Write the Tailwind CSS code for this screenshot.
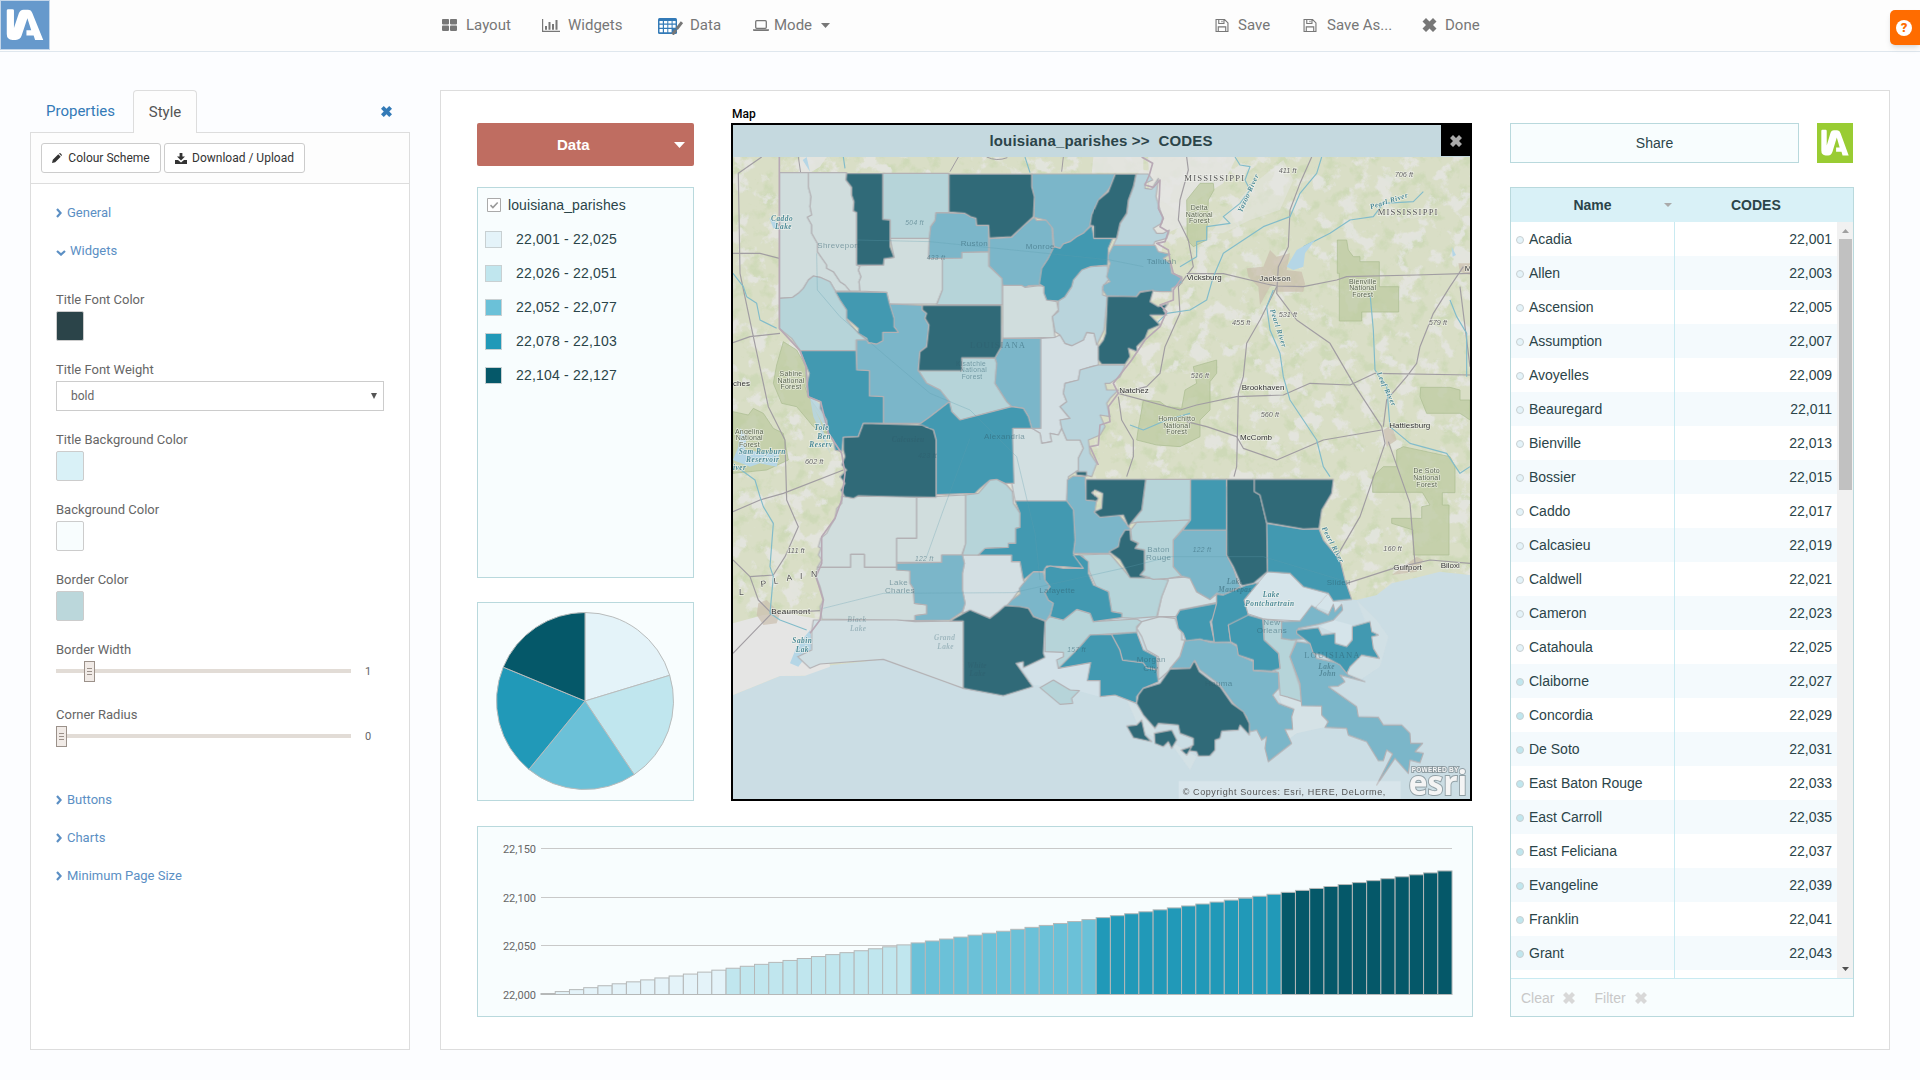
<!DOCTYPE html>
<html lang="en">
<head>
<meta charset="utf-8">
<title>Dashboard designer</title>
<script src="https://cdn.jsdelivr.net/npm/@tailwindcss/browser@4"></script>
</head>
<body class="flex h-[1080px] w-[1920px] flex-col overflow-hidden bg-[#fcfdff] font-[Roboto,sans-serif] text-[#666]">

<svg class="hidden">
  <symbol id="logo" viewBox="0 0 50 50">
    <path fill="#fff" d="M6 10q0-1.500 1.500-1.500H12q1.500 0 1.500 1.500V28L18.500 13q1.300-4 5-4H28q3.500 0 4.600 3.500L44 40.500h-8.500L34 36h-7.500v-5.500h5L27.500 18l-6 18q-1.500 4.500-6 4.500H12q-6 0-6-6z"/>
  </symbol>
  <symbol id="cross" viewBox="0 0 14 14">
    <path fill="currentColor" d="M3.500 0L7 3.500 10.500 0 14 3.500 10.500 7 14 10.500 10.500 14 7 10.500 3.500 14 0 10.500 3.500 7 0 3.500z"/>
  </symbol>
  <symbol id="floppy" viewBox="0 0 14 14">
    <path fill="none" stroke="currentColor" stroke-width="1.200" d="M.6.6h9.200l3.600 3.600v9.200H.6zM3.500.6v4.200h5.600V.6M3 13.400V8.500h8v4.900M7 1.800v1.800"/>
  </symbol>
  <symbol id="right" viewBox="0 0 6 10"><path fill="none" stroke="currentColor" stroke-width="2.200" d="M1 1l3.600 4L1 9"/></symbol>
  <symbol id="down" viewBox="0 0 10 6"><path fill="none" stroke="currentColor" stroke-width="2.200" d="M1 1l4 3.600L9 1"/></symbol>
</svg>

<header class="flex h-[52px] shrink-0 border-b border-[#dfe7ee] bg-[#fdfdfd] text-[15px] text-[#777]">
  <div class="h-[50px] w-[50px] border border-[#c3d6ea] bg-[#6699cc]"><svg class="h-12 w-12"><use href="#logo"/></svg></div>
  <nav class="ml-[392px] flex h-[50px] items-center">
    <a class="flex w-[100px] items-center gap-[9px]">
      <svg class="h-3 w-[15px]" viewBox="0 0 15 12" fill="currentColor"><rect width="7" height="5.400" rx=".8"/><rect x="8" width="7" height="5.400" rx=".8"/><rect y="6.500" width="7" height="5.400" rx=".8"/><rect x="8" y="6.500" width="7" height="5.400" rx=".8"/></svg>Layout</a>
    <a class="flex w-[116px] items-center gap-2">
      <svg class="h-[13px] w-[18px]" viewBox="0 0 18 13" fill="currentColor"><path d="M0 0h1.200v11.800H18V13H0zM3 7h2v3.800H3zM6.500 3h2v7.800h-2zM10 5h2v5.800h-2zM13.500 1h2v9.800h-2z"/></svg>Widgets</a>
    <a class="flex w-[95px] items-center gap-[7px]">
      <svg class="mt-[2px] h-[17px] w-[25px]" viewBox="0 0 25 17"><rect width="19" height="16" rx="1.500" fill="#337ab7"/><path fill="#fff" d="M1.500 3h3.300v2.500H1.500zM6 3h3.300v2.500H6zM10.300 3h3.300v2.500h-3.300zM14.600 3h3v2.500h-3zM1.500 6.700h3.300v3H1.500zM6 6.700h3.300v3H6zM10.300 6.700h3.300v3h-3.300zM1.500 11h3.300v3.200H1.500zM6 11h3.300v3.200H6zM10.300 11h3.300v3.200h-3.300zM14.600 6.700h3v3h-3z"/><path stroke="#777" stroke-width="3" d="M14.500 16.500l3.500-4.500M18.600 11.200l5.400-7"/></svg>Data</a>
    <a class="flex w-[462px] items-center gap-[5px]">
      <svg class="h-[11px] w-4" viewBox="0 0 16 11"><rect x="2.700" y=".7" width="10.600" height="7.600" rx="1" fill="none" stroke="currentColor" stroke-width="1.300"/><path fill="currentColor" d="M0 9.200h16v1q0 .8-1 .8H1q-1 0-1-.8z"/></svg>Mode
      <svg class="ml-1 h-[5px] w-[9px]" viewBox="0 0 9 5"><path fill="currentColor" d="M0 0h9L4.500 5z"/></svg></a>
    <a class="flex w-[88px] items-center gap-[9px]"><svg class="h-[13px] w-[14px]"><use href="#floppy"/></svg>Save</a>
    <a class="flex w-[119px] items-center gap-[10px]"><svg class="h-[13px] w-[14px]"><use href="#floppy"/></svg>Save As...</a>
    <a class="flex items-center gap-2"><svg class="h-[14px] w-[15px]"><use href="#cross"/></svg>Done</a>
  </nav>
  <div class="ml-auto mt-[10px] flex h-[35px] w-[30px] items-center justify-center rounded-l-[5px] bg-[#ff6c00] pr-[2px] shadow-md">
    <span class="flex h-4 w-4 items-center justify-center rounded-full bg-white text-[13px] font-black leading-none text-[#ff6c00]">?</span>
  </div>
</header>

<div class="flex grow">
  <!-- Style editor -->
  <aside class="ml-[30px] mt-[38px] flex h-[960px] w-[380px] flex-col">
    <div class="relative z-10 -mb-px flex h-[43px] items-center text-[15px]">
      <span class="w-[103px] pl-4 text-[#337ab7]">Properties</span>
      <span class="flex h-[43px] w-16 items-center justify-center rounded-t border border-b-0 border-[#ddd] bg-[#fdfdfd] text-[#555]">Style</span>
      <svg class="ml-[184px] h-[11px] w-[11px] text-[#337ab7]"><use href="#cross"/></svg>
    </div>
    <div class="flex grow flex-col border border-[#ddd] bg-white text-[13px]">
      <div class="flex h-[51px] items-start gap-[3px] border-b border-[#ddd] bg-[#fdfdfd] pl-[10px] pt-[10px] text-xs text-[#333]">
        <button class="flex h-[30px] w-[120px] items-center justify-center gap-[6px] rounded-[3px] border border-[#ccc] bg-white"><svg class="h-[10px] w-[10px]" viewBox="0 0 10 10"><path fill="#333" d="M0 10l.8-3.200L6.300 1.300l2.400 2.400L3.200 9.200zM7 .6q.8-1 1.800 0l.6.6q1 .9 0 1.800z"/></svg>Colour Scheme</button>
        <button class="flex h-[30px] w-[141px] items-center justify-center gap-[5px] rounded-[3px] border border-[#ccc] bg-white"><svg class="h-[11px] w-3" viewBox="0 0 12 11"><path fill="#333" d="M4.600 0h2.800v3.500H10L6 7.500 2 3.500h2.600zM0 7h3l3 2.400L9 7h3v4H0z"/></svg>Download / Upload</button>
      </div>
      <div class="flex flex-col pl-[25px] pr-[24px] pt-[10px]">
        <div class="flex h-[38px] items-center gap-[5px] text-[#5b8fc4]"><svg class="h-[10px] w-[6px]"><use href="#right"/></svg>General</div>
        <div class="flex h-[38px] items-center gap-1 text-[#5b8fc4]"><svg class="mt-1 h-[6px] w-[10px]"><use href="#down"/></svg>Widgets</div>
        <div class="mt-[19px] flex h-[70px] flex-col"><span class="h-[22px] leading-[22px]">Title Font Color</span><i class="h-[30px] w-7 rounded-[2px] border border-[#ccc] bg-[#2b4449]"></i></div>
        <div class="flex h-[70px] flex-col"><span class="h-[22px] leading-[22px]">Title Font Weight</span>
          <div class="flex h-[30px] w-[328px] items-center justify-between border border-[#ccc] pl-[14px] pr-[6px] text-xs">bold<svg class="h-[6px] w-[6px]" viewBox="0 0 6 6"><path fill="#555" d="M0 0h6L3 6z"/></svg></div></div>
        <div class="flex h-[70px] flex-col"><span class="h-[22px] leading-[22px]">Title Background Color</span><i class="h-[30px] w-7 rounded-[2px] border border-[#ccc] bg-[#d9f1f7]"></i></div>
        <div class="flex h-[70px] flex-col"><span class="h-[22px] leading-[22px]">Background Color</span><i class="h-[30px] w-7 rounded-[2px] border border-[#ccc] bg-[#f8fdfe]"></i></div>
        <div class="flex h-[70px] flex-col"><span class="h-[22px] leading-[22px]">Border Color</span><i class="h-[30px] w-7 rounded-[2px] border border-[#ccc] bg-[#bbd7db]"></i></div>
        <div class="flex h-[65px] flex-col"><span class="h-[22px] leading-[22px]">Border Width</span>
          <div class="flex h-[20px] items-center"><i class="h-1 w-7 bg-[#e2dcd6]"></i><i class="flex h-[21px] w-[11px] flex-col items-center justify-center gap-[2px] border border-[#9b918a] bg-[#f1ebe7]"><b class="h-px w-[5px] bg-[#9b918a]"></b><b class="h-px w-[5px] bg-[#9b918a]"></b><b class="h-px w-[5px] bg-[#9b918a]"></b></i><i class="h-1 w-64 bg-[#e2dcd6]"></i><span class="ml-[14px] mt-[2px] text-[11px]">1</span></div></div>
        <div class="flex h-[65px] flex-col"><span class="h-[22px] leading-[22px]">Corner Radius</span>
          <div class="flex h-[20px] items-center"><i class="flex h-[21px] w-[11px] flex-col items-center justify-center gap-[2px] border border-[#9b918a] bg-[#f1ebe7]"><b class="h-px w-[5px] bg-[#9b918a]"></b><b class="h-px w-[5px] bg-[#9b918a]"></b><b class="h-px w-[5px] bg-[#9b918a]"></b></i><i class="h-1 w-71 bg-[#e2dcd6]"></i><span class="ml-[14px] mt-[2px] text-[11px]">0</span></div></div>
        <div class="mt-[12px] flex h-[38px] items-center gap-[5px] text-[#5b8fc4]"><svg class="h-[10px] w-[6px]"><use href="#right"/></svg>Buttons</div>
        <div class="flex h-[38px] items-center gap-[5px] text-[#5b8fc4]"><svg class="h-[10px] w-[6px]"><use href="#right"/></svg>Charts</div>
        <div class="flex h-[38px] items-center gap-[5px] text-[#5b8fc4]"><svg class="h-[10px] w-[6px]"><use href="#right"/></svg>Minimum Page Size</div>
      </div>
    </div>
  </aside>

  <!-- Dashboard canvas -->
  <main class="ml-[30px] mt-[38px] flex h-[960px] w-[1450px] border border-[#ddd] bg-white pl-9 pt-8 font-['Liberation_Sans',sans-serif] text-sm text-[#2b4449]">
    <div class="flex w-[996px] flex-col">
      <div class="flex h-[678px]">
        <div class="flex w-[217px] flex-col">
          <div class="flex h-[43px] items-center rounded-[2px] bg-[#bf6d61] pl-[80px] pr-[9px] text-[15px] font-bold text-white">Data<svg class="ml-auto h-[6px] w-[11px]" viewBox="0 0 11 6"><path fill="#fff" d="M0 0h11L5.500 6z"/></svg></div>
          <div class="mt-[21px] h-[391px] border border-[#b9d9dd] bg-[#f8fdfe]">
            <div class="flex h-[34px] items-center gap-[7px] pl-[9px]"><svg class="h-[14px] w-[14px]" viewBox="0 0 14 14"><path fill="#fff" stroke="#aaa" d="M.5.5h13v13H.5z"/><path fill="none" stroke="#999" stroke-width="1.600" d="M3.500 7.200l2.400 2.300 4.800-5"/></svg><span class="tracking-[0.1px]">louisiana_parishes</span></div>
            <div id="legend"></div>
          </div>
          <div class="mt-6 flex h-[199px] justify-center border border-[#b9d9dd] bg-[#f8fdfe] pr-px pt-[9px]"><svg id="pie" class="h-[178px] w-[178px]" viewBox="-89 -89 178 178" stroke="#b9bcbc" stroke-width="1"></svg></div>
        </div>
        <div class="relative ml-[37px] h-[678px] w-[741px] border-2 border-black bg-[#cbdde4]">
          <span class="absolute -top-[18px] -left-px font-[Roboto,sans-serif] text-xs leading-[14px] font-medium text-black">Map</span>
          <div class="flex h-8 items-center bg-[#c5d9df]"><span class="grow pb-px pl-[28px] text-center text-[15px] font-bold tracking-[0.17px] whitespace-pre">louisiana_parishes &gt;&gt;  CODES</span>
            <span class="flex h-[31px] w-[29px] items-center justify-center self-start bg-black text-[#aaa]"><svg class="h-3 w-3"><use href="#cross"/></svg></span></div>
          <svg class="h-[642px] w-[737px]" viewBox="9 171 2211 1926" font-family="Liberation Sans, sans-serif">
            <defs>
              <filter id="veg" x="0" y="0" width="100%" height="100%" color-interpolation-filters="sRGB"><feTurbulence type="fractalNoise" baseFrequency=".018" numOctaves="5" seed="7"/><feColorMatrix values="0 0 0 0 .898  0 0 0 0 .9  0 0 0 0 .886  8 0 0 0 -4.4"/><feComposite in2="SourceGraphic" operator="in"/></filter>
              <filter id="veg2" x="0" y="0" width="100%" height="100%" color-interpolation-filters="sRGB"><feTurbulence type="fractalNoise" baseFrequency=".022" numOctaves="4" seed="21"/><feColorMatrix values="0 0 0 0 .80  0 0 0 0 .85  0 0 0 0 .71  5 0 0 0 -2.6"/><feComposite in2="SourceGraphic" operator="in"/></filter>
              <path id="land" d="M9 171H2220V1425L2130 1415 2070 1430 1985 1450 1940 1485 1880 1500 1865 1498 1600 1350 1000 1500 850 1700 700 1765 460 1678 250 1702 225 1727 150 1728 9 1785z"/>
            </defs>
            <rect x="9" y="171" width="2211" height="1926" fill="#cbdde4"/>
            <use href="#land" fill="#d9dec6"/>
            <use href="#land" fill="#fff" filter="url(#veg2)" opacity=".8"/>
            <use href="#land" fill="#fff" filter="url(#veg)" opacity=".85"/>
            <g fill="#e5e5e4"><path d="M9 1570L100 1545 170 1540 280 1560 300 1700 225 1727 150 1728 9 1785z"/><path d="M1255 171H1520L1480 250 1400 300 1420 350 1310 400 1290 470 1250 440 1260 380z" opacity=".8"/><path d="M1560 260L1660 180 1690 240 1650 330 1560 360 1480 400 1440 400z" opacity=".5"/><path d="M210 171H290L270 200 240 218 205 218z" opacity=".8"/><path d="M1090 171H1240V218H1085z" opacity=".8"/></g>
            <g fill="#bdcba2" fill-opacity=".75" stroke="#a9bb90" stroke-width="2">
              <path d="M140 795L160 725 200 750 228 800 225 860 235 890 280 950 290 1000 250 980 200 920 155 910 130 850z"/>
              <path d="M9 935L55 945 70 925 100 940 130 985 160 1000 175 1080 110 1110 9 1120z"/>
              <path d="M1410 250H1450L1452 270 1435 300 1430 420 1390 440 1372 420 1370 300z"/>
              <path d="M1822 420H1850L1855 450 1870 470H1890V485H1948V560H2006V636H1895V663H1828V520H1822z"/>
              <path d="M1225 985L1240 900 1290 905 1310 920 1355 925 1365 870 1400 850 1390 800 1460 780V820L1440 845V930L1410 960V1010L1350 1040 1280 1035 1220 1020z"/>
              <path d="M2072 862H2160L2190 870V900H2220V960L2190 940H2090L2070 890z"/>
              <path d="M1928 1177V1130L1960 1100H2000V1050L2020 1040 2160 1070 2175 1100V1178H2137V1215H2157V1365H2050V1290L1985 1270V1255H2075V1220L2100 1215 2077 1177z"/>
            </g>
            <g fill="#cbbfae" opacity=".7"><path d="M1550 505L1600 500 1620 450 1640 470 1680 460 1670 510 1715 515 1725 550 1720 575 1640 575 1640 555 1620 560 1590 615 1585 560 1555 530z"/><path d="M85 1510L110 1500 150 1540 140 1570 100 1575 80 1545z"/><path d="M2185 490H2220V525L2190 515z"/><path d="M1960 990L1985 975 2000 1020 1970 1040z"/><path d="M1985 1425L2060 1370 2080 1380 2060 1415z"/></g>
            <g fill="none" stroke="#a19da2" stroke-width="3.500" stroke-linejoin="round">
              <path d="M95 171L25 220 30 520 70 710 115 920 165 1020 170 1200 205 1280 165 1370 130 1425 60 1430M9 460H90L148 475M9 728L60 710 150 700M9 1380L60 1430 85 1500 125 1540 9 1660M9 1235L90 1200 160 1180 340 1110M125 1540L270 1532"/>
              <path d="M1370 171L1375 210 1350 300 1345 360 1375 420 1390 500 1345 560 1350 640 1305 740 1290 820 1250 860 1165 880"/>
              <path d="M1370 521H1480L1610 552 1640 558 1720 560 1820 540 1850 530 2060 525 2220 520"/>
              <path d="M1745 171L1710 250 1680 330 1675 440 1645 500 1640 580 1700 660 1800 730 1870 850 1955 980 1965 1030 1890 1250 1820 1370"/>
              <path d="M1640 560L1590 660 1550 730 1540 830 1525 880 1520 1100 1512 1130M1165 880L1350 930 1400 915 1520 890 1660 885 1740 850 1860 855 1935 820 2220 825M2200 500L2160 560 2110 640 2070 740 2060 790 2030 830 1970 900 1960 980M2190 560L2220 800"/>
              <path d="M1370 965L1430 980 1520 1010 1540 1045 1640 1080 1780 1020 1955 990M1165 890L1175 960 1210 1020 1210 1070 1190 1130M1975 1025L2040 1210 2055 1390M1850 1450L1990 1405 2100 1380 2220 1390"/>
              <path d="M205 171L212 218M660 215L685 171M770 171Q800 185 832 173M995 215L1000 171" stroke-width="3"/>
            </g>
            <g fill="none" stroke="#82bcca" stroke-width="3.500" stroke-linejoin="round">
              <path d="M9 520L40 560 50 590 80 610 90 660 140 685M20 1100L75 1140 90 1190 100 1220 130 1270 120 1400 130 1430 120 1540 150 1560 230 1590"/>
              <path d="M1515 171L1530 195 1560 200 1545 240 1560 270 1530 310 1480 350 1500 370 1430 380 1430 420 1400 425 1400 470 1350 500M1775 171L1760 220 1710 280 1680 350 1600 380 1480 460 1450 530 1430 600 1380 630 1310 640 1280 670"/>
              <path d="M2080 275L2050 305 1960 310 1930 350 1860 360 1800 400 1720 440M1630 570L1610 620 1620 690 1650 760 1660 830 1680 900 1720 960 1760 1020 1780 1100 1800 1130M1920 580L1930 690 1935 810 1970 860 1980 980 2040 1030 2150 1060 2190 1120 2220 1100M2160 600L2180 650 2210 700 2210 830M1200 975L1240 990 1310 960 1380 940" />
              <path d="M340 171L345 205M885 171L900 218" />
            </g>
            <g fill="#b5d6e6"><path d="M1670 500L1700 450 1755 420 1725 460 1720 500 1690 510z"/><path d="M230 171L240 215 218 180zM2165 440L2178 465 2168 470z"/><path d="M30 985L50 1010 45 1050 120 1060 150 1050 140 1100 90 1090 60 1100 9 1080 25 1040z"/><path d="M180 1690L200 1640 240 1590 250 1640 205 1700z"/><path d="M225 810L240 850 230 880 290 930 320 1020 300 1010 255 930 270 960 300 1060 250 950z" opacity=".8"/><path d="M118 355L140 365 150 390 130 385z"/></g>

            <!-- Gulf shoals -->
            <g fill="#e3e8e8" opacity=".7"><path d="M1880 1500L1940 1560 1975 1610 1950 1700 1890 1740 1840 1720 1880 1650 1920 1600z" opacity=".4"/><path d="M1640 1770L1780 1820 1790 1880 1700 1900 1620 1960 1680 1880z" opacity=".6"/><path d="M1190 1800L1240 1830 1280 1900 1400 1970 1380 2010 1330 1940 1230 1890z" opacity=".5"/></g>
            <path fill="#d2e1e8" d="M860 1680L1000 1640 1080 1680 1120 1740 1110 1790 1000 1760 910 1755z"/>

            <!-- Open water inside the parish outline -->
            <path fill="#d5e4ea" stroke="#b7b5b7" stroke-width="3" d="M1612 1415L1680 1420 1725 1460 1795 1480 1760 1520 1710 1563 1600 1557 1550 1540 1542 1500z"/>
            <path fill="#d5e4ea" d="M1760 1520L1795 1480 1810 1503 1840 1510 1815 1540zM1770 1580L1815 1600 1815 1630 1850 1640 1867 1610 1865 1575 1810 1560z"/>

            <g stroke="#b3b1b4" stroke-width="3.500" stroke-linejoin="round">
              <!-- 22,001 - 22,025 -->
              <g fill="#d0dddd">
                <path d="M148 218H235V260L243 290 240 320 245 345 232 352 245 375V400L262 430V455L290 495V505L310 515 330 545 345 555 360 573H316L300 545 270 532 250 528 235 540 220 565 205 580 188 592 148 595z"/>
                <path d="M235 218H350L348 240 365 262V285L372 305 370 333 380 337V495L390 500 385 510 393 530 387 545 390 573H360L345 555 330 545 310 515 290 505V495L262 455V430L245 400V375L232 352 245 345 240 320 243 290 235 260z"/>
                <path d="M460 495L462 476 492 472 480 415H598L596 475H637V570L620 612H478L470 577 390 573 387 545 393 530 385 510 390 497z"/>
                <path d="M818 556H875L885 562 930 557 942 560V580L950 600 980 605 985 630 967 650 975 712 818 715z"/>
                <path fill="#d4dfe3" d="M932 715L975 712 990 705 1005 730 1025 737 1060 720 1070 697 1092 700 1105 740V795L1085 800 1050 810 1045 840 1005 850 1000 880 1010 905 990 920 1010 945 1020 955 990 960 995 985 985 1005 960 1000 965 1025 935 1030 930 1000 905 985H932z"/>
                <path fill="#d2dfe1" d="M848 985H905L930 1000 935 1030 965 1025 960 1000 985 1005 995 985 1010 1020 1050 1020 1060 1045 1045 1075V1110L1015 1130 1010 1203H855L845 1150z"/>
                <g transform="translate(0 1020)">
                  <path d="M335 170L500 168 560 172V295H500V382H403V343H362V382H262L275 360 265 345 272 325 265 320 272 295 290 280 300 260 315 235 320 205 335 190z"/>
                  <path d="M560 172L707 165V310L695 345H635V367H500V295H560z"/>
                  <path d="M262 382H362V343H403V382H500V390H540V430L550 445 553 490 590 495V522L555 527V542L275 537 270 500 280 480 270 440 258 410z"/>
                  <path fill="#d3dfe3" d="M697 345H845V365H870L880 420 885 430 860 460 835 495 800 520 780 535 720 512 697 520 705 490 697 450V400L703 370z"/>
                  <path fill="#d1dfe3" d="M250 540H500L555 545 700 543V745L460 658 270 672 240 685 203 650 245 630V570z"/>
                </g>
                <g transform="translate(1110 1020)" fill="#d2dfe2"><path d="M110 565L125 545 180 530 225 535 235 565 245 575V600H255L240 650 210 690 175 720V650L140 630 125 590z"/><path d="M205 415L270 410 290 455 330 478 350 462V488L240 510 228 530H172L185 470z"/></g>
              </g>
              <!-- 22,026 - 22,051 -->
              <g fill="#b6d4d9">
                <path d="M458 220H657V338H618L615 362 602 380 598 415H480V360L458 358z"/>
                <path d="M148 595L188 592 205 580 220 565 235 540 250 528 270 532 300 545 316 573 330 600 350 630V660L385 700 410 720H378V752H210L185 715 148 685z"/>
                <path d="M637 475L695 474V457L776 455V498L816 535V614H620L637 570z"/>
                <path d="M565 812H695V773L795 775 800 790 795 850 830 905 845 920 690 960 665 935 658 905 630 870 590 850z"/>
                <path fill="#b9d4dc" d="M1133 497L1135 540 1118 560V585L1132 590 1127 640 1122 690 1100 735 1092 700 1070 697 1060 720 1025 737 1005 730 990 705 975 695 967 650 985 635V603L1005 590 1025 560 1030 540 1055 510 1080 500z"/>
                <path fill="#b9d4dc" d="M1218 222H1255L1268 240 1245 250V265L1265 268 1275 250 1285 235 1278 290 1290 330 1298 350 1295 370 1270 385 1280 400 1300 400 1318 390 1310 415 1275 425 1270 436H1150L1160 413 1170 370 1190 340 1195 300 1210 260z"/>
                <path fill="#b9d4dc" d="M1050 810L1085 800 1105 795H1185L1170 830 1140 850 1125 850 1130 870 1165 870 1140 895 1130 910 1140 950 1110 945 1125 980 1110 1005 1075 1020 1080 1060 1100 1090 1085 1130 1045 1120V1075L1060 1045 1050 1020H1010L995 985 990 960 1020 955 990 920 1010 905 1000 880 1005 850 1045 840z"/>
                <g transform="translate(0 1020)">
                  <path d="M707 165L745 160 780 120 800 118 830 135 847 155 850 190 870 220V262L857 265V310H835V322L770 325 745 345H697L707 310z"/>
                  <path d="M1045 345L1140 342 1200 412 1270 415 1315 420 1295 470 1280 530 1210 535 1175 533V520L1145 515 1135 455 1100 445 1080 400 1075 385 1060 350z"/>
                  <path d="M945 543L960 530 1000 540 1040 508 1080 520 1090 545 1220 537 1235 545 1220 560V577L1080 585 1050 620 1000 680 985 685 980 660 1000 650V637L945 635z"/>
                  <path d="M930 743L970 720 1020 750 1048 752 1025 775 1028 790 990 793z"/>
                </g>
                <g transform="translate(1110 1020)">
                  <path d="M137 118H272L270 240 110 247 92 250 125 210z"/>
                  <path d="M110 247L270 240 245 270 220 300V380L245 408 205 415 160 418 120 405 133 390V330L105 325 115 310 95 300 92 270z"/>
                  <path d="M490 537L550 545 545 595 590 597 570 650 600 740 605 785 575 775 540 765 535 700 518 690 540 685 535 640 492 600z"/>
                </g>
              </g>
              <!-- 22,052 - 22,077 -->
              <g fill="#7bb6c9">
                <path d="M618 338L705 340 722 350 738 355 740 376H776V455L695 457V474L596 475 598 415 602 380 615 362z"/>
                <path d="M778 416L845 412 875 382 912 352 920 362 948 360 965 380 968 420 970 450 955 475 940 500 930 555 895 557 885 562 875 556H818L816 535 778 498z"/>
                <path d="M905 222H1156L1145 255 1130 275 1110 295 1095 330 1080 378 1060 400 1040 410 1020 425 1000 432 990 445 972 440 968 385 948 360 912 352V300L905 260z"/>
                <path d="M1150 436H1275L1285 455 1320 463 1300 475 1320 490 1325 520 1355 530V550L1325 565V575L1290 575 1260 572 1230 575 1220 590 1130 588 1118 570 1120 555 1140 545 1130 530 1140 490 1132 470z"/>
                <path d="M478 612L577 616V630L590 640 585 655 597 675 590 740 570 755 565 812 590 850 630 870 658 905 600 950 575 970H460V890L418 888V812L380 810V720H410L415 730 440 732 458 722V697H505L492 680V655z"/>
                <path d="M818 715H932V985H905L895 950 880 925 845 920 830 905 795 850 800 790 795 773 814 740z"/>
                <g transform="translate(0 1020)">
                  <path d="M500 370L635 367V345H697L703 370 697 400V450L705 490 697 515 660 540 555 542V527L590 522V495L553 490 550 445 540 430V393L500 390z"/>
                  <path d="M1012 120L1030 108 1065 110 1070 180H1100L1095 210 1115 230 1165 222 1200 265 1195 290 1165 320 1137 340H1030L1035 300 1030 210 1010 183z"/>
                  <path d="M880 430L910 395 940 397 945 420 960 440 945 460 955 480 970 490 962 520 948 543 925 535 910 530 895 505 830 497 845 480 870 462 868 445z"/>
                </g>
                <g transform="translate(1110 1020)">
                  <path d="M248 270H380V345L400 385 415 430 422 440 370 465 350 460 330 478 290 455 270 415 245 408 220 380V300z"/>
                  <path d="M545 545L600 543 635 497 655 510 685 525 700 493 705 515 725 493 728 510 700 540 655 553 595 565 590 580 630 595 575 600 545 595z"/>
                  <path d="M590 605L630 610 650 655 720 670 745 705 795 725 720 705 735 725 715 738 685 740 770 800 775 830 835 832 850 855 880 855 905 855 930 880 932 910H968L945 935 970 940 960 968 930 960 925 1000 885 955 830 1035 878 942 860 930 850 962H835L800 905 745 885 740 865 675 862 685 845 665 825V798L605 797 600 730 570 650z"/>
                  <path d="M255 602L300 597 330 607 392 608 412 620 415 645 460 665V692L535 697 537 745 518 765 535 790 582 808 575 830 578 868 555 868 575 910 505 965 495 925 500 890 485 900 470 870 450 875 440 830 400 790 360 735 300 690 285 662 270 685H210L240 650z"/>
                </g>
              </g>
              <!-- 22,078 - 22,103 -->
              <g fill="#4299b1">
                <path d="M1085 376L1092 415H1148L1135 445 1133 495 1080 500 1055 510 1030 540 1025 560 1005 590 985 603 950 600 942 580V560L928 552 935 505 955 475 972 440 990 445 1000 432 1020 425 1040 410 1060 400z"/>
                <path d="M316 575L470 577 478 610 492 655V680L505 697H458V722L440 732 415 727 410 715 385 700V685L350 655V630L330 600z"/>
                <path d="M210 752H378L380 810 418 812V888L460 890V970H400L385 1010 340 1012 335 1055 315 1050 310 1020 295 1000 290 960 270 925 272 905 235 890 230 860 238 820 225 790z"/>
                <path d="M658 905L665 935 690 960 845 920 880 925 895 950 905 985H848V1020L852 1150H825L800 1138 780 1140 750 1165 735 1180 618 1184V1020L610 990 565 975 600 950z"/>
                <g transform="translate(0 1020)">
                  <path d="M855 183H1010L1030 210 1035 300 1030 340 1060 385 1000 380 950 378 940 395H910L880 420 870 365H845V345H745L765 325 835 322V310H857V265L870 262V220z"/>
                  <path d="M945 385L960 378 1000 385 1060 385 1030 345 1050 345 1075 365V400L1090 435 1135 455 1145 515 1175 520V533L1090 545 1080 520 1040 508 1000 540 960 530 970 490 955 480 945 460 960 440 945 420z"/>
                  <path d="M1080 585L1145 583 1170 630 1178 660 1240 668 1250 683 1280 690 1285 725 1240 745 1220 770V790L1155 765 1110 770V722H1072L1082 668 985 685 1050 620z"/>
                </g>
                <g transform="translate(1110 1020)">
                  <path d="M35 583L110 577 130 630 170 650 172 688 140 683 130 668 68 660 60 630z"/>
                  <path d="M272 118H380V270H248L272 240z"/>
                  <path d="M500 250L610 267H657L670 300 720 360 735 420 755 478 700 483 685 460 610 440 570 400 502 395z"/>
                  <path d="M350 490L345 530 330 545 343 605 310 600 300 597 258 602 250 580 235 565 228 530 240 510z"/>
                  <path d="M350 462L370 465 440 435 475 428 432 480 445 525 430 545 385 555 392 605 343 607 335 545 350 490z"/>
                  <path d="M445 525L488 537 492 600 535 640 540 685 515 693 460 690V660L415 645 410 615 392 605 385 555z"/>
                  <path d="M590 570L655 563 665 585 705 580V610L740 620 757 600V560L810 545 815 575 835 585 815 590 820 625 838 655 800 648 785 645 750 680 740 700 720 675 665 645 640 640 630 610 590 580z"/>
                </g>
              </g>
              <!-- 22,104 - 22,127 -->
              <g fill="#306a78">
                <path d="M350 220H458V358L480 360V440L492 472 462 476 460 495H380V337L370 333 372 305 365 285V262L348 240z"/>
                <path d="M657 222H905V260L913 290 910 350 875 382 845 410 778 414 776 376H740L738 355 722 350 705 340 657 336z"/>
                <path d="M1156 222H1218L1210 260 1195 300 1190 340 1170 370 1160 415H1092V378L1080 376 1085 345 1105 300 1135 275z"/>
                <path d="M1132 588L1220 590 1230 577 1270 570 1260 605 1285 620 1315 610 1300 630 1310 645 1260 645 1290 675 1255 690 1245 715 1220 740 1222 755 1195 745 1200 770 1185 793H1115L1105 780V740L1120 720 1127 700z"/>
                <path d="M577 616H814V740L795 773H695V812H565L570 755 590 740 597 675 585 655 590 640 577 630z"/>
                <path d="M400 970L575 975 610 990 618 1020V1192L500 1190 385 1187 370 1195 345 1190 332 1170 345 1150 330 1130 350 1110 335 1095 345 1070 340 1050V1012L385 1010z"/>
                <path d="M1068 1138H1247L1235 1230 1202 1270 1195 1280 1180 1245 1110 1252 1092 1235 1115 1225 1118 1180 1095 1170 1085 1178 1105 1195 1100 1203 1068 1200zM1038 1115H1070V1128L1040 1125z"/>
                <path d="M700 1540L720 1530 780 1555 805 1535 825 1517 870 1520 895 1525 910 1550 945 1563 940 1660 945 1672 880 1703V1685L858 1690 908 1760 820 1787 700 1765V1563H660z"/>
                <g transform="translate(1110 1020)">
                  <path d="M75 270H90L92 300 115 310 105 325 133 330V390L120 405 150 413H90L60 360 27 335 55 320 60 295z"/>
                  <path d="M380 118H463V155L480 165 500 250 502 395 460 430 425 437 400 380 380 345z"/>
                  <path d="M463 118H700L695 160 665 210 657 265 610 267 500 248 480 165 463 155z"/>
                  <path d="M210 687L270 685 283 662 298 695 330 720 360 740 395 790 430 815 448 850V885L420 855 415 870 365 873 360 895 345 900V930L330 947 295 948 290 935 255 930 280 915 280 895 240 880 235 855 175 850 165 865 130 825 110 790 115 765 130 745 180 730z"/>
                  <path d="M80 858L110 855 125 840 135 885 155 905 100 893zM163 880L215 870 230 900 215 925 205 905 190 920 165 910zM243 930L275 920 260 945z"/>
                </g>
              </g>
            </g>
            <path fill="none" stroke="#5f9fb0" stroke-width="2" opacity=".45" d="M380 420L600 425 900 455 1140 480 1240 500M260 460L262 570 330 650 470 770 600 880 720 930 860 1070 915 1300 930 1440M280 1525L460 1480 850 1478 1200 1400 1320 1370 1600 1370 1850 1445M1495 1365L1490 1160M720 1015L640 1230 590 1370"/>
            <path fill="none" stroke="#b8a9b5" stroke-width="5" stroke-linejoin="round" d="M1235 171L1268 190 1258 225 1245 255 1270 262 1290 240 1288 290 1285 325 1300 355 1290 380 1315 395 1305 425 1280 430 1315 450 1320 480 1330 520 1355 535 1330 570 1330 600 1290 615 1310 635 1290 680 1245 720 1205 780 1150 850 1165 880 1135 920 1140 965 1110 975 1105 1035 1080 1040 1105 1095M148 171V685L210 752 228 800 235 890 272 905 295 1000 335 1060 345 1120 335 1200 315 1255 275 1310 275 1390 258 1430 280 1500 270 1560 240 1600"/>

            <g fill="#333" stroke="#f4f5f0" stroke-width="4" paint-order="stroke" font-size="25" stroke-opacity=".7">
              <g font-size="24"><text x="1168" y="878">Natchez</text><text x="1535" y="869">Brookhaven</text><text x="1530" y="1020">McComb</text><text x="1978" y="984">Hattiesburg</text><text x="1370" y="541">Vicksburg</text><text x="1588" y="543" letter-spacing="1">Jackson</text><text x="1990" y="1409">Gulfport</text><text x="2132" y="1403">Biloxi</text><text x="124" y="1541" letter-spacing="1">Beaumont</text><text x="9" y="858">ches</text><text x="2204" y="514">M</text></g>
              <g font-size="21" fill="#5b6650" text-anchor="middle" letter-spacing=".5"><text x="183" y="827">Sabine</text><text x="183" y="848">National</text><text x="183" y="868">Forest</text><text x="58" y="1001">Angelina</text><text x="58" y="1021">National</text><text x="58" y="1041">Forest</text><text x="1408" y="330">Delta</text><text x="1408" y="350">National</text><text x="1408" y="370">Forest</text><text x="1898" y="551">Bienville</text><text x="1898" y="571">National</text><text x="1898" y="591">Forest</text><text x="1340" y="963">Homochitto</text><text x="1340" y="983">National</text><text x="1340" y="1003">Forest</text><text x="2090" y="1119">De Soto</text><text x="2090" y="1140">National</text><text x="2090" y="1160">Forest</text></g>
              <g font-size="22" font-style="italic" fill="#666"><text x="1646" y="218">411 ft</text><text x="1994" y="232">706 ft</text><text x="1646" y="650">531 ft</text><text x="1506" y="676">455 ft</text><text x="2096" y="676">579 ft</text><text x="1382" y="834">516 ft</text><text x="1592" y="950">560 ft</text><text x="1960" y="1353">160 ft</text><text x="225" y="1091">602 ft</text><text x="172" y="1360">111 ft</text></g>
              <g font-family="Liberation Serif, serif" font-size="26" fill="#555" letter-spacing="2.500"><text x="1363" y="244" textLength="182">MISSISSIPPI</text><text x="1943" y="345" textLength="182">MISSISSIPPI</text></g>
              <g font-family="Liberation Serif, serif" font-size="22" font-style="italic" font-weight="bold" fill="#4e8b98" letter-spacing="1.500"><text x="26" y="1062">Sam Rayburn</text><text x="48" y="1085">Reservoir</text><text x="238" y="1041">Reserv</text><text x="253" y="991">Tole</text><text x="262" y="1016">Ben</text><text x="123" y="364">Caddo</text><text x="135" y="388">Lake</text><text x="187" y="1629">Sabin</text><text x="197" y="1655">Lak</text><text x="1598" y="1492">Lake</text><text x="1546" y="1518">Pontchartrain</text><text transform="translate(1535 338) rotate(-65)">Yazoo River</text><text transform="translate(1922 328) rotate(-18)">Pearl River</text><text transform="translate(1620 630) rotate(72)">Pearl River</text><text transform="translate(1940 820) rotate(65)">Leaf River</text><text transform="translate(1775 1285) rotate(62)">Pearl River</text><text x="9" y="1111">iver</text></g>
              <g font-size="26" fill="#555"><text x="27" y="1484">L</text><text transform="translate(93 1461) rotate(-8)">P</text><text transform="translate(132 1452) rotate(-8)">L</text><text transform="translate(170 1443) rotate(-8)">A</text><text x="210" y="1436">I</text><text x="243" y="1430">N</text></g>
            </g>
            <g fill="#2f5f6e" opacity=".5" font-size="24" letter-spacing="1">
              <text x="262" y="444">Shreveport</text><text x="692" y="438">Ruston</text><text x="887" y="446">Monroe</text><text x="762" y="1016">Alexandria</text><text x="1250" y="492">Tallulah</text><text x="478" y="1455">Lake</text><text x="465" y="1479">Charles</text><text x="928" y="1479">Lafayette</text><text x="1252" y="1356">Baton</text><text x="1248" y="1380">Rouge</text><text x="1600" y="1576">New</text><text x="1580" y="1600">Orleans</text><text x="1220" y="1687">Morgan</text><text x="1240" y="1713">City</text><text x="1425" y="1757">Houma</text><text x="1790" y="1456">Slidell</text>
              <g font-family="Liberation Serif, serif"><text x="720" y="744" font-size="26" letter-spacing="3">LOUISIANA</text><text x="1723" y="1675" font-size="26" letter-spacing="3">LOUISIANA</text></g>
              <g font-size="20"><text x="678" y="797">Kisatchie</text><text x="690" y="817">National</text><text x="695" y="837">Forest</text><g font-style="italic"><text x="526" y="375">504 ft</text><text x="590" y="481">433 ft</text><text x="555" y="1382">122 ft</text><text x="1388" y="1357">122 ft</text><text x="1012" y="1657">157 ft</text><text x="565" y="1075">423 ft</text></g></g>
              <g font-family="Liberation Serif, serif" font-style="italic" font-weight="bold" font-size="22"><text x="485" y="1026">Calcasieu</text><text x="352" y="1566" opacity=".6">Black</text><text x="360" y="1592" opacity=".6">Lake</text><text x="612" y="1621" opacity=".6">Grand</text><text x="622" y="1646" opacity=".6">Lake</text><text x="712" y="1704">White</text><text x="718" y="1729">Lake</text><text x="1490" y="1451">Lake</text><text x="1465" y="1477">Maurepas</text><text x="1765" y="1706">Lake</text><text x="1767" y="1729">John</text></g>
            </g>
            <rect x="1346" y="2043" width="666" height="54" fill="#fff" opacity=".25"/>
            <text x="1358" y="2084" font-size="27" fill="#555" textLength="608">© Copyright Sources: Esri, HERE, DeLorme,</text>
            <g fill="#f4f4f4" stroke="#7d8b90" stroke-width="6" stroke-opacity=".75" paint-order="stroke" font-weight="bold"><text x="2045" y="2015" font-size="20" textLength="140">POWERED BY</text><text x="2036" y="2085" font-size="102" font-family="Open Sans, sans-serif" textLength="176" lengthAdjust="spacingAndGlyphs">esri</text></g>
          </svg>
        </div>
      </div>
      <div class="mt-[25px] h-[191px] border border-[#b9d9dd] bg-[#f8fdfe]">
        <svg id="bars" class="h-[189px] w-[994px]" viewBox="478 827 994 189" font-family="Roboto, sans-serif" font-size="11" fill="#666"></svg>
      </div>
    </div>

    <div class="ml-[37px] flex w-[344px] flex-col">
      <div class="flex h-10 justify-between">
        <div class="flex w-[289px] items-center justify-center border border-[#b9d9dd] bg-[#f8fdfe]">Share</div>
        <svg class="mr-px h-10 w-9 bg-[#99cc33]" viewBox="0 0 50 50" preserveAspectRatio="none"><use href="#logo" width="50" height="50"/></svg>
      </div>
      <div class="mt-6 flex h-[830px] flex-col border border-[#b9d9dd] bg-[#f8fdfe]">
        <div class="flex h-[34px] shrink-0 items-center bg-[#d9f1f7] font-bold"><span class="w-[163px] text-center">Name</span><svg class="-ml-[10px] h-1 w-2" viewBox="0 0 8 4"><path fill="#aaa" d="M0 0h8L4 4z"/></svg><span class="ml-[59px]">CODES</span></div>
        <div class="flex h-[757px] overflow-hidden border-b border-[#c9eaf1]">
          <div id="rows" class="w-[326px] bg-white"></div>
          <div class="flex w-4 flex-col items-center bg-[#f1f1f1]">
            <svg class="mt-[7px] h-1 w-[7px]" viewBox="0 0 7 4"><path fill="#a0a0a0" d="M0 4h7L3.500 0z"/></svg>
            <div class="mt-[6px] h-[251px] w-[13px] bg-[#c1c1c1]"></div>
            <svg class="mt-auto mb-[7px] h-1 w-[7px]" viewBox="0 0 7 4"><path fill="#505050" d="M0 0h7L3.500 4z"/></svg>
          </div>
        </div>
        <div class="flex grow items-center pl-[10px] text-[#c8c8c8]">Clear<svg class="ml-[9px] h-3 w-3 text-[#d8d8d8]"><use href="#cross"/></svg><span class="ml-[19px]">Filter</span><svg class="ml-[9px] h-3 w-3 text-[#d8d8d8]"><use href="#cross"/></svg></div>
      </div>
    </div>
  </main>
</div>

<script>
const colors = ['#e4f3f9', '#c0e6ee', '#6bc1d8', '#2199b8', '#055869'];
const ranges = ['22,001 - 22,025', '22,026 - 22,051', '22,052 - 22,077', '22,078 - 22,103', '22,104 - 22,127'];
document.getElementById('legend').innerHTML = ranges.map((r, i) =>
  `<div class="flex h-[34px] items-center gap-[14px] pl-[7px]"><i class="h-[17px] w-[17px] border border-[#c8d0d2]" style="background:${colors[i]}"></i><span class="tracking-[0.2px]">${r}</span></div>`).join('');

let angle = 0;
document.getElementById('pie').innerHTML = [13, 13, 13, 13, 12].map((n, i) => {
  const at = a => `${(88.5 * Math.sin(a)).toFixed(2)} ${(-88.5 * Math.cos(a)).toFixed(2)}`;
  const start = angle;
  angle += n / 64 * 2 * Math.PI;
  return `<path fill="${colors[i]}" d="M0 0L${at(start)}A88.5 88.5 0 0 1 ${at(angle)}z"/>`;
}).join('');

let chart = [0, 50, 100, 150].map(v => {
  const y = Math.round(994 - v * 0.973) + 0.5;
  return `<path stroke="#c9c9c9" d="M541 ${y}H1452"/><text x="536" y="${y + 4}" text-anchor="end">22,${String(v).padStart(3, '0')}</text>`;
}).join('');
for (let i = 0; i < 64; i++) {
  const h = (2 * i + 1) * 0.973;
  chart += `<rect x="${(541 + i * 14.235).toFixed(2)}" y="${(994.5 - h).toFixed(2)}" width="14.235" height="${h.toFixed(2)}" fill="${colors[Math.floor(i / 13)]}" stroke="#b5b8b8"/>`;
}
document.getElementById('bars').innerHTML = chart;

const names = ['Acadia', 'Allen', 'Ascension', 'Assumption', 'Avoyelles', 'Beauregard', 'Bienville', 'Bossier', 'Caddo', 'Calcasieu', 'Caldwell', 'Cameron', 'Catahoula', 'Claiborne', 'Concordia', 'De Soto', 'East Baton Rouge', 'East Carroll', 'East Feliciana', 'Evangeline', 'Franklin', 'Grant', ''];
document.getElementById('rows').innerHTML = names.map((n, i) =>
  `<div class="flex h-[34px] items-center ${i % 2 ? 'bg-[#f4fafd]' : 'bg-white'}"><div class="flex h-[34px] w-[164px] items-center gap-[5px] border-r border-[#c9eaf1] pl-[5px]">${n ? `<i class="mt-[2px] h-2 w-2 rounded-full border border-[#c8d0d2]" style="background:${colors[i < 13 ? 0 : 1]}"></i>` : ''}<span>${n}</span></div><span class="grow pr-[5px] text-right">${n ? '22,0' + String(2 * i + 1).padStart(2, '0') : ''}</span></div>`).join('');
</script>
</body>
</html>
